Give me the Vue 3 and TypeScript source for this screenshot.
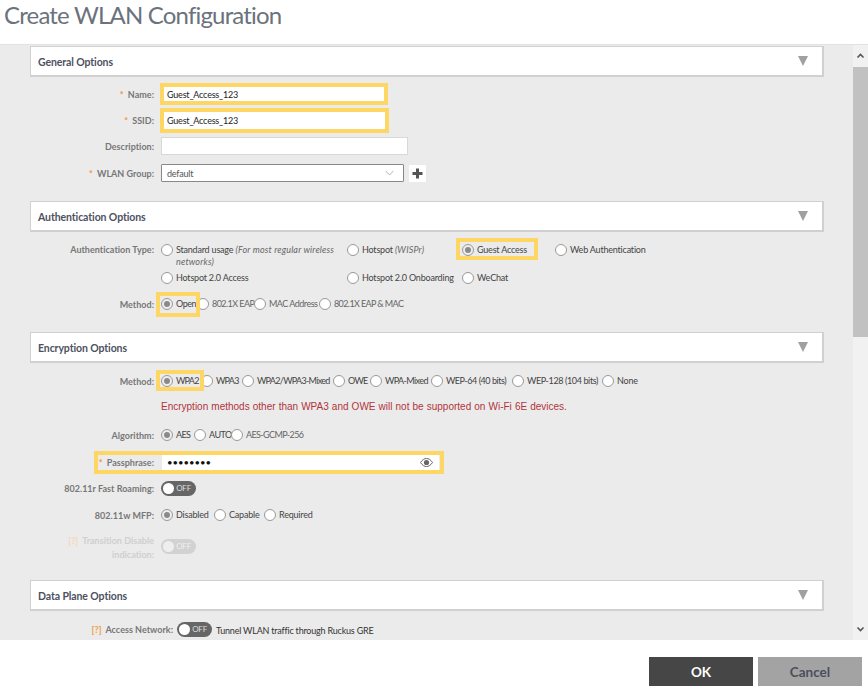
<script setup lang="ts">
interface Opt { label: string; width: number; on?: boolean; box?: string; dim?: boolean; ls?: number }
const authMethods: Opt[] = [
  { label: 'Open', width: 36, on: true, box: 'box-open', ls: -0.45 },
  { label: '802.1X EAP', width: 57, dim: true, ls: -0.55 },
  { label: 'MAC Address', width: 65, dim: true, ls: -0.5 },
  { label: '802.1X EAP & MAC', width: 90, dim: true, ls: -0.6 },
]
const encMethods: Opt[] = [
  { label: 'WPA2', width: 40, on: true, box: 'box-wpa', ls: -0.7 },
  { label: 'WPA3', width: 41, ls: -0.7 },
  { label: 'WPA2/WPA3-Mixed', width: 91, ls: -0.7 },
  { label: 'OWE', width: 37, ls: -0.7 },
  { label: 'WPA-Mixed', width: 61, ls: -0.6 },
  { label: 'WEP-64 (40 bits)', width: 81, ls: -0.45 },
  { label: 'WEP-128 (104 bits)', width: 90, ls: -0.38 },
  { label: 'None', width: 40 },
]
const algorithms: Opt[] = [
  { label: 'AES', width: 33, on: true, ls: -0.7 },
  { label: 'AUTO', width: 37, ls: -0.5 },
  { label: 'AES-GCMP-256', width: 80, dim: true, ls: -0.6 },
]
const mfp: Opt[] = [
  { label: 'Disabled', width: 53, on: true },
  { label: 'Capable', width: 50 },
  { label: 'Required', width: 60 },
]
const spacing = (o: Opt) => (o.ls ? { letterSpacing: o.ls + 'px' } : undefined)
</script>

<template>
  <div class="dialog">
    <h1 class="title">Create WLAN Configuration</h1>
    <div class="panel">
      <div class="content">
        <div class="sec-head first"><span>General Options</span><i class="tri"></i></div>
        <div class="body b4">
          <div class="row">
            <label><em>*</em> Name:</label>
            <input class="inp hl name" readonly value="Guest_Access_123" />
          </div>
          <div class="row">
            <label><em>*</em> SSID:</label>
            <input class="inp hl ssid" readonly value="Guest_Access_123" />
          </div>
          <div class="row">
            <label>Description:</label>
            <input class="inp desc" readonly value="" />
          </div>
          <div class="row group">
            <label><em>*</em> WLAN Group:</label>
            <div class="select">
              <span>default</span>
              <svg width="9" height="6" viewBox="0 0 9 6"><path d="M.7 1 4.5 5 8.3 1" fill="none" stroke="#b5b5b5" stroke-width="1" /></svg>
            </div>
            <div class="plus">
              <svg width="11" height="11" viewBox="0 0 11 11"><path d="M5.5 .5v10M.5 5.5h10" stroke="#555" stroke-width="3" /></svg>
            </div>
          </div>
        </div>

        <div class="sec-head"><span>Authentication Options</span><i class="tri"></i></div>
        <div class="body auth">
          <div class="auth-row">
            <label>Authentication Type:</label>
            <div class="auth-grid">
              <div class="radio top wrap"><i class="dot"></i><span>Standard usage <em class="it">(For most regular wireless networks)</em></span></div>
              <div class="radio top"><i class="dot"></i><span>Hotspot <em class="it">(WISPr)</em></span></div>
              <div class="radio top guest"><i class="dot on"></i><span>Guest Access</span></div>
              <div class="radio top"><i class="dot"></i><span>Web Authentication</span></div>
              <div class="radio"><i class="dot"></i><span>Hotspot 2.0 Access</span></div>
              <div class="radio"><i class="dot"></i><span>Hotspot 2.0 Onboarding</span></div>
              <div class="radio"><i class="dot"></i><span>WeChat</span></div>
            </div>
          </div>
          <div class="row method">
            <label>Method:</label>
            <div class="radios">
              <div v-for="o in authMethods" :key="o.label" class="radio" :class="o.box" :style="{ width: o.width + 'px' }">
                <i class="dot" :class="{ on: o.on }"></i><span :class="{ dim: o.dim }" :style="spacing(o)">{{ o.label }}</span>
              </div>
            </div>
          </div>
        </div>

        <div class="sec-head enc"><span>Encryption Options</span><i class="tri"></i></div>
        <div class="body b5">
          <div class="row">
            <label>Method:</label>
            <div class="radios">
              <div v-for="o in encMethods" :key="o.label" class="radio" :class="o.box" :style="{ width: o.width + 'px' }">
                <i class="dot" :class="{ on: o.on }"></i><span :style="spacing(o)">{{ o.label }}</span>
              </div>
            </div>
          </div>
          <div class="row warn-row">
            <label></label>
            <p class="warn">Encryption methods other than WPA3 and OWE will not be supported on Wi-Fi 6E devices.</p>
          </div>
          <div class="row alg">
            <label>Algorithm:</label>
            <div class="radios">
              <div v-for="o in algorithms" :key="o.label" class="radio" :style="{ width: o.width + 'px' }">
                <i class="dot" :class="{ on: o.on }"></i><span :class="{ dim: o.dim }" :style="spacing(o)">{{ o.label }}</span>
              </div>
            </div>
          </div>
          <div class="row pass-row">
            <div class="pass-box">
              <label><em>*</em> Passphrase:</label>
              <div class="pass">
                <span class="dots">••••••••</span>
                <svg width="13" height="9" viewBox="0 0 13 9"><path d="M.5 4.5C2.5 1.5 4.5.5 6.5.5s4 1 6 4c-2 3-4 4-6 4s-4-1-6-4Z" fill="none" stroke="#666" stroke-width="1" /><circle cx="6.5" cy="4.5" r="2.6" fill="#666" /></svg>
              </div>
            </div>
          </div>
          <div class="row">
            <label>802.11r Fast Roaming:</label>
            <div class="toggle"><i></i><span>OFF</span></div>
          </div>
          <div class="row mfp">
            <label>802.11w MFP:</label>
            <div class="radios">
              <div v-for="o in mfp" :key="o.label" class="radio" :style="{ width: o.width + 'px' }">
                <i class="dot" :class="{ on: o.on }"></i><span>{{ o.label }}</span>
              </div>
            </div>
          </div>
          <div class="row trans">
            <label class="faded"><b>[?]</b> Transition Disable<br />indication:</label>
            <div class="toggle off"><i></i><span>OFF</span></div>
          </div>
        </div>

        <div class="sec-head data"><span>Data Plane Options</span><i class="tri"></i></div>
        <div class="body b5">
          <div class="row wide">
            <label><b>[?]</b> Access Network:</label>
            <div class="toggle"><i></i><span>OFF</span></div>
            <span class="tunnel">Tunnel WLAN traffic through Ruckus GRE</span>
          </div>
        </div>
      </div>
      <div class="scrollbar">
        <svg class="arrow" width="15" height="8" viewBox="0 0 15 8"><path d="M4.5 5.5 7.5 2.5 10.5 5.5" fill="none" stroke="#555" stroke-width="1.6" /></svg>
        <div class="thumb"></div>
        <div class="track"></div>
        <svg class="arrow" width="15" height="8" viewBox="0 0 15 8"><path d="M4.5 2.5 7.5 5.5 10.5 2.5" fill="none" stroke="#555" stroke-width="1.6" /></svg>
      </div>
    </div>
    <div class="footer">
      <button class="btn ok">OK</button>
      <button class="btn cancel">Cancel</button>
    </div>
  </div>
</template>

<style scoped>
.dialog {
  width: 868px;
  height: 695px;
  display: flex;
  flex-direction: column;
  background: #fff;
  font-family: Lato, "Noto Sans", sans-serif;
  font-size: 9px;
  letter-spacing: -0.2px;
  color: #444;
  overflow: hidden;
}
.title {
  margin: 0;
  height: 44px;
  flex: none;
  padding: 0 0 0 4px;
  box-sizing: border-box;
  font-size: 24px;
  letter-spacing: -0.82px;
  line-height: 30px;
  font-weight: 400;
  color: #6b727c;
}
.panel {
  flex: none;
  height: 596px;
  display: flex;
  background: #ebebeb;
  border-top: 1px solid #e2e2e2;
  box-sizing: border-box;
  overflow: hidden;
}
.content {
  width: 853px;
  flex: none;
  padding: 1px 0 0 30px;
  box-sizing: border-box;
}
.scrollbar {
  flex: 1;
  display: flex;
  flex-direction: column;
  background: #f1f1f1;
}
.arrow { flex: none; margin: 7px 0; }
.thumb { height: 270px; background: #c1c1c1; flex: none; }
.track { flex: 1; }
.sec-head {
  width: 794px;
  height: 31px;
  box-sizing: border-box;
  border: 1px solid #d0d0d0;
  border-width: 1px 2px 2px 1px;
  background: #fff;
  display: flex;
  align-items: center;
  justify-content: space-between;
  padding: 1px 14px 0 7px;
  font-size: 10.5px;
  letter-spacing: -0.1px;
  font-weight: 700;
  color: #4d5161;
}
.tri {
  width: 0;
  height: 0;
  border-left: 5.5px solid transparent;
  border-right: 5.5px solid transparent;
  border-top: 10px solid #a0a0a0;
  margin-top: -2px;
}
.body { width: 793px; }
.b4 { padding-top: 4px; }
.b5 { padding-top: 5px; }
.auth { padding-top: 12px; }
.sec-head.enc { margin-top: 15px; }
.sec-head.data { margin-top: 18px; }
.row {
  display: flex;
  align-items: center;
  min-height: 26px;
  margin-left: -30px;
}
.row.group { margin-top: 1px; margin-bottom: 15px; }
.row.method { margin-top: 7px; }
.row.warn-row { margin-top: -1px; }
.row.alg { margin-top: 3px; }
.row.pass-row { margin-top: 1px; }
.row.mfp { margin-top: 1px; }
label {
  width: 154px;
  flex: none;
  margin-right: 7px;
  text-align: right;
  font-weight: 700;
  letter-spacing: 0.02px;
  color: #777;
}
label em { color: #f0913a; font-style: normal; margin-right: 2px; }
label b { color: #f0a24e; margin-right: 2px; }
.inp {
  box-sizing: border-box;
  border: 1px solid #d8d8d8;
  background: #fff;
  font: inherit;
  letter-spacing: inherit;
  color: #222;
  padding: 0 5px;
  outline: none;
  height: 18px;
  width: 247px;
}
.inp.hl { outline: 4px solid #fdd663; outline-offset: 0; border: 0; padding: 0 3px; }
.name { width: 220px !important; height: 14px !important; margin-left: 3px; }
.ssid { width: 221px !important; height: 17px !important; margin-left: 3px; }
.select {
  width: 243px;
  height: 18px;
  box-sizing: border-box;
  border: 1px solid #888;
  border-radius: 1px;
  background: #fff;
  display: flex;
  align-items: center;
  justify-content: space-between;
  padding: 0 9px 0 5px;
  color: #555;
}
.plus {
  width: 17px;
  height: 17px;
  margin-left: 5px;
  background: #fff;
  display: flex;
  align-items: center;
  justify-content: center;
  border-radius: 1px;
}
.auth-row { display: flex; margin-left: -30px; }
.auth-row label { line-height: 12px; }
.auth-grid {
  display: grid;
  grid-template-columns: 186px 115px 93px 150px;
  row-gap: 4px;
  line-height: 12px;
}
.radio {
  display: flex;
  align-items: center;
  gap: 3px;
  flex: none;
  color: #444;
  line-height: 12px;
  white-space: nowrap;
}
.radio.top { align-items: flex-start; }
.radio.wrap { white-space: normal; }
.radio.wrap > span { width: 168px; }
.radio.guest { position: relative; }
.radio.guest::before {
  content: "";
  position: absolute;
  left: -6px;
  top: -6px;
  width: 74px;
  height: 14px;
  border: 4px solid #fdd663;
  pointer-events: none;
}
.it { font-style: italic; color: #666; letter-spacing: 0.17px; }
.dim { color: #666; }
.dot {
  width: 12px;
  height: 12px;
  flex: none;
  box-sizing: border-box;
  border: 1px solid #999;
  border-radius: 50%;
  background: #fff;
  display: block;
  position: relative;
  font-style: normal;
}
.dot.on { background: #eee; }
.dot.on::after {
  content: "";
  position: absolute;
  left: 2px;
  top: 2px;
  width: 6px;
  height: 6px;
  border-radius: 50%;
  background: #8a8a8a;
}
.radios { display: flex; align-items: center; }
.box-open, .box-wpa { position: relative; }
.box-open::before, .box-wpa::before {
  content: "";
  position: absolute;
  left: -5px;
  z-index: 1;
  box-sizing: border-box;
  border: 4px solid #fdd663;
  pointer-events: none;
}
.box-open::before { right: -3px; top: -6px; bottom: -7px; }
.box-wpa::before { right: -3px; top: -5px; bottom: -4px; }
.warn {
  margin: 0;
  font-family: "Liberation Sans", Arial, sans-serif;
  font-size: 10px;
  letter-spacing: 0;
  word-spacing: .3px;
  color: #b1343c;
}
.pass-box {
  margin-left: 98px;
  width: 342px;
  height: 15px;
  outline: 4px solid #fdd663;
  display: flex;
  align-items: center;
}
.pass-box label { width: 56px; margin-right: 7px; white-space: nowrap; }
.pass {
  width: 277px;
  height: 15px;
  margin-left: 1px;
  background: #fff;
  display: flex;
  align-items: center;
  justify-content: space-between;
  padding: 0 6px 0 5px;
  box-sizing: border-box;
}
.dots { color: #111; font-size: 9.5px; letter-spacing: 0; }
.toggle {
  width: 35px;
  height: 15px;
  flex: none;
  border-radius: 8px;
  background: #666;
  position: relative;
  color: #ddd;
  font-size: 8px;
  line-height: 15px;
  text-align: right;
  padding-right: 5px;
  box-sizing: border-box;
}
.toggle i {
  position: absolute;
  left: 2px;
  top: 2px;
  width: 11px;
  height: 11px;
  border-radius: 50%;
  background: #fff;
}
.toggle.off { background: #d2d2d2; color: #eee; margin-top: -2px; }
.toggle.off i { background: #eee; }
.trans { margin-top: 5px; }
.trans label { line-height: 14px; padding-top: 1px; }
.faded, .faded b { color: #cfcfcf; }
.faded b { color: #f3d9bb; }
.wide label { width: 173px; margin-right: 4px; white-space: nowrap; }
.tunnel { margin-left: 4px; color: #333; padding-top: 3px; }
.footer {
  flex: 1;
  display: flex;
  justify-content: flex-end;
  align-items: flex-start;
  gap: 5px;
  padding: 17px 6px 0 0;
}
.btn {
  width: 104px;
  height: 29px;
  border: 0;
  font-family: inherit;
  font-size: 13.5px;
  font-weight: 700;
}
.ok { background: #464646; color: #fff; }
.cancel { background: #a3a3a3; color: #4a4f5c; }
</style>
